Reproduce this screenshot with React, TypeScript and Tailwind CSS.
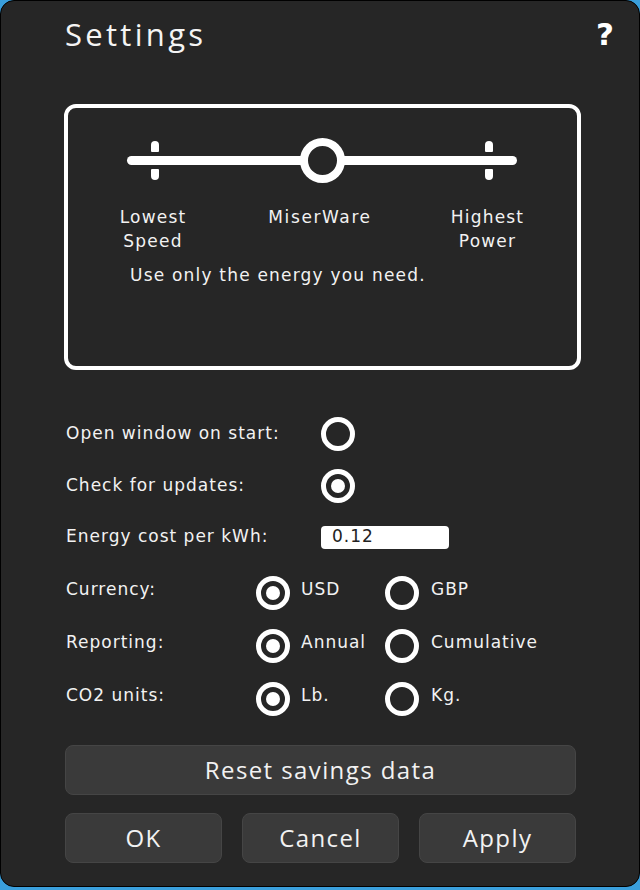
import React from "react";

const label = "font-['DejaVu_Sans',sans-serif] text-[17px] tracking-[1px] text-[#f2f2f2]";
const sl = "font-['DejaVu_Sans',sans-serif] text-[17px] tracking-[1.2px] text-[#f2f2f2]";
const btn = "h-[50px] rounded-[8px] bg-[#3a3a3a] border border-[#454545] font-['Open_Sans',sans-serif] text-[24px] tracking-[1.4px] text-[#f2f2f2]";

function Radio({ on }: { on?: boolean }) {
  return (
    <div className="w-[34px] h-[34px] rounded-full border-[5px] border-white flex items-center justify-center shrink-0">
      {on ? <div className="w-[14px] h-[14px] rounded-full bg-white" /> : null}
    </div>
  );
}

function Tick() {
  return (
    <div className="flex flex-col items-center gap-[17px]">
      <div className="w-[8px] h-[11px] rounded-t-[4px] rounded-b-[1px] bg-white" />
      <div className="w-[8px] h-[11px] rounded-b-[4px] rounded-t-[1px] bg-white" />
    </div>
  );
}

export default function App() {
  return (
    <div className="w-[640px] h-[890px] bg-[#3a9fdc]">
      <div className="w-[640px] h-[887px] bg-[#262626] rounded-[14px] border border-black relative flex flex-col">
        <div className="flex items-start justify-between pl-[64px] pr-[25px] pt-[12px]">
          <div className="font-['Open_Sans',sans-serif] text-[31px] tracking-[3.3px] leading-[42px] text-[#f4f4f4]">Settings</div>
          <div className="font-['DejaVu_Sans',sans-serif] font-bold text-[31px] leading-[42px] text-white">?</div>
        </div>

        <div className="ml-[63px] w-[517px] mt-[49px] h-[266px] border-[4px] border-white rounded-[12px] relative">
          <div className="absolute left-[59px] top-[48px] w-[390px] h-[9px] rounded-full bg-white" />
          <div className="absolute left-[83px] top-[33px]"><Tick /></div>
          <div className="absolute left-[417px] top-[33px]"><Tick /></div>
          <div className="absolute left-[232px] top-[30px] w-[45px] h-[45px] rounded-full border-[8px] border-white bg-[#262626]" />
          <div className={`absolute left-[35px] top-[97px] w-[100px] text-center leading-[24px] ${sl}`}>Lowest<br />Speed</div>
          <div className={`absolute left-[177px] top-[97px] w-[150px] text-center leading-[24px] tracking-[1.6px] ${sl}`}>MiserWare</div>
          <div className={`absolute left-[367px] top-[97px] w-[105px] text-center leading-[24px] ${sl}`}>Highest<br />Power</div>
          <div className={`absolute left-[62px] top-[155px] leading-[24px] ${sl}`}>Use only the energy you need.</div>
        </div>

        <div className="pl-[65px] mt-[47px] flex flex-col">
          <div className="flex items-center h-[34px]">
            <div className={`w-[255px] ${label}`}>Open window on start:</div>
            <Radio />
          </div>
          <div className="flex items-center h-[34px] mt-[18px]">
            <div className={`w-[255px] ${label}`}>Check for updates:</div>
            <Radio on />
          </div>
          <div className="flex items-center h-[34px] mt-[17px]">
            <div className={`w-[255px] ${label}`}>Energy cost per kWh:</div>
            <div className="w-[128px] h-[23px] bg-white rounded-[4px] px-[11px] flex items-center font-['DejaVu_Sans',sans-serif] text-[17px] tracking-[1px] text-[#222]">0.12</div>
          </div>
          {[
            ["Currency:", "USD", "GBP"],
            ["Reporting:", "Annual", "Cumulative"],
            ["CO2 units:", "Lb.", "Kg."],
          ].map(([a, b, c], i) => (
            <div key={i} className={`flex items-start h-[34px] ${i === 0 ? "mt-[22px]" : "mt-[19px]"}`}>
              <div className={`w-[190px] pt-[1px] ${label}`}>{a}</div>
              <Radio on />
              <div className={`w-[95px] pl-[11px] pt-[1px] ${label}`}>{b}</div>
              <Radio />
              <div className={`pl-[12px] pt-[1px] ${label}`}>{c}</div>
            </div>
          ))}
        </div>

        <div className="ml-[64px] w-[511px] mt-[29px] flex flex-col gap-[18px]">
          <button className={btn}>Reset savings data</button>
          <div className="grid grid-cols-3 gap-[20px]">
            {["OK", "Cancel", "Apply"].map((t) => (
              <button key={t} className={btn}>{t}</button>
            ))}
          </div>
        </div>
      </div>
    </div>
  );
}
